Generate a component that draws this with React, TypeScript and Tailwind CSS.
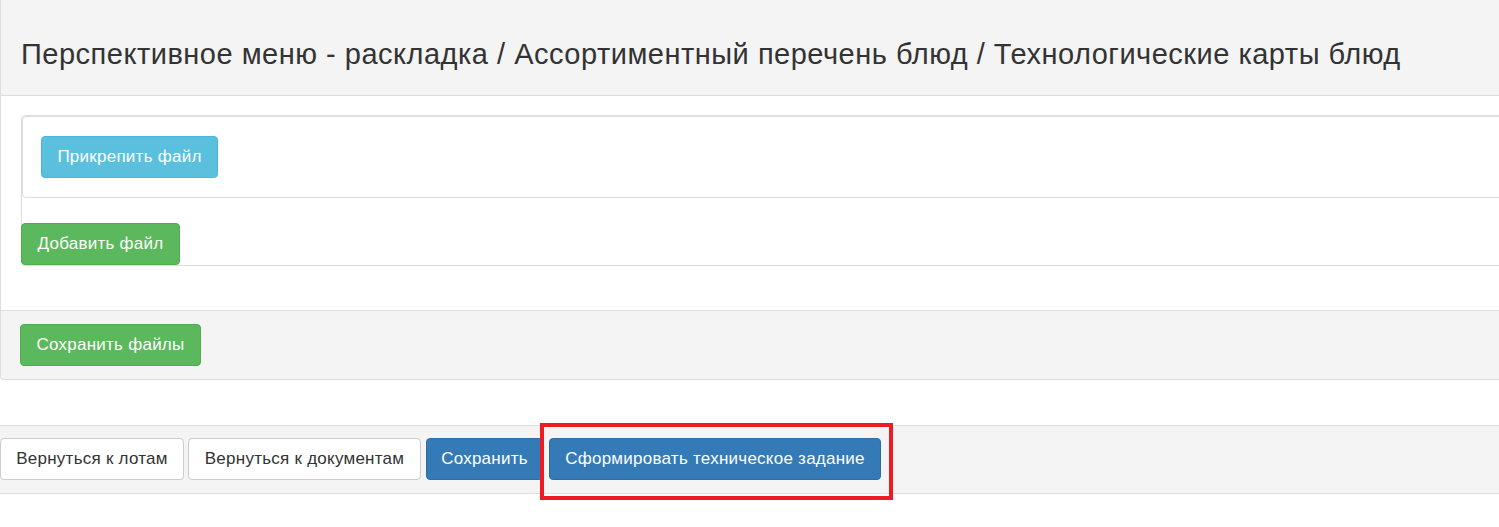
export default function App() {
  const font = { fontFamily: '"Liberation Sans", Arial, Helvetica, sans-serif' };
  const base = "rounded-[4px] py-[10px] leading-[20px] text-center whitespace-nowrap text-[17px] tracking-[0.25px]";
  const colored = `${base} text-white`;
  const plain = `${base} bg-white border border-[#cccccc] text-[#333]`;
  return (
    <div className="w-[1499px] h-[527px] overflow-hidden bg-white text-[#333]" style={font}>
      <div className="w-[1540px] border border-t-0 border-[#dddddd] rounded-b-[4px]">
        <div className="bg-[#f4f4f4] border-b border-[#dddddd] h-[96px] pl-5 pt-[38px]">
          <h1 className="text-[29px] leading-[32px] tracking-[0.5px] font-normal whitespace-nowrap">
            Перспективное меню - раскладка / Ассортиментный перечень блюд / Технологические карты блюд
          </h1>
        </div>
        <div className="pl-5 pt-[19px] pb-[44px]">
          <div className="border border-[#dddddd] rounded-[4px]">
            <div className="border border-[#dddddd] rounded-[4px] pl-[18px] pt-[19px] pb-[19px]">
              <button className={`${colored} w-[177px] bg-[#5bc0de] border border-[#46b8da]`}>
                Прикрепить файл
              </button>
            </div>
            <div className="pt-[25px]">
              <button className={`${colored} -ml-px w-[159px] bg-[#5cb85c] border border-[#4cae4c]`}>
                Добавить файл
              </button>
            </div>
          </div>
        </div>
        <div className="bg-[#f4f4f4] border-t border-[#dddddd] pl-[19px] pt-[13px] pb-[13px] rounded-b-[4px]">
          <button className={`${colored} w-[181px] bg-[#5cb85c] border border-[#4cae4c]`}>
            Сохранить файлы
          </button>
        </div>
      </div>
      <div className="mt-[45px] w-[1540px] bg-[#f4f4f4] border-t border-b border-[#dddddd] pt-3 pb-[13px] flex items-center">
        <button className={`${plain} w-[184px]`}>Вернуться к лотам</button>
        <button className={`${plain} ml-[4px] w-[233px]`}>Вернуться к документам</button>
        <button className={`${colored} ml-[5px] w-[117px] bg-[#337ab7] border border-[#2e6da4]`}>
          Сохранить
        </button>
        <div className="relative ml-[6px]">
          <button className={`${colored} w-[332px] bg-[#337ab7] border border-[#2e6da4]`}>
            Сформировать техническое задание
          </button>
          <span className="absolute -left-[9px] -top-[15px] -right-[12px] -bottom-[20px] border-4 border-[#ed1c24] pointer-events-none" />
        </div>
      </div>
    </div>
  );
}
